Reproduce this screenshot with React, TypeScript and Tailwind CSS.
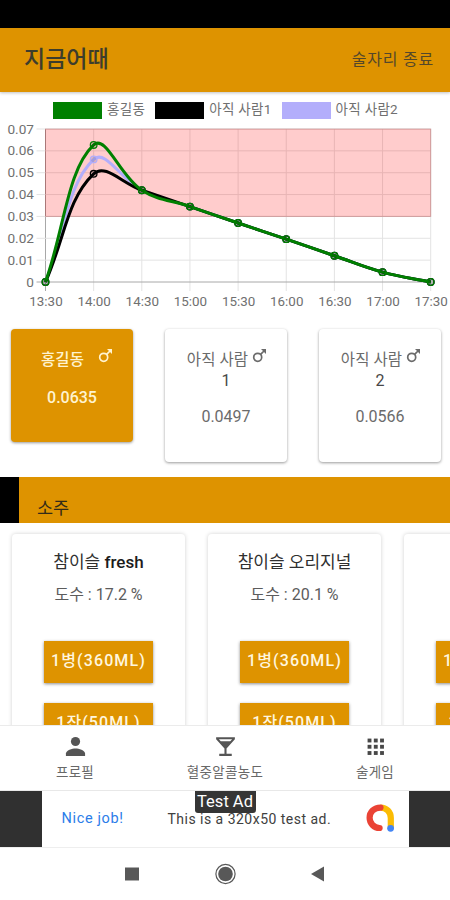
import clsx from 'clsx';

interface Series {
  label: string;
  color: string;
  values: number[];
}

interface Person {
  name: string;
  suffix?: string;
  level: string;
  active?: boolean;
}

interface Drink {
  name: string;
  latin?: string;
  proof: string;
}

const tail = [0.042, 0.0345, 0.027, 0.0196, 0.012, 0.0045, 0];

const series: Series[] = [
  { label: '홍길동', color: '#008000', values: [0, 0.0627, ...tail] },
  { label: '아직 사람1', color: '#000000', values: [0, 0.0495, ...tail] },
  { label: '아직 사람2', color: '#b3aefb', values: [0, 0.0561, ...tail] },
];

const times = ['13:30', '14:00', '14:30', '15:00', '15:30', '16:00', '16:30', '17:00', '17:30'];

const people: Person[] = [
  { name: '홍길동', level: '0.0635', active: true },
  { name: '아직 사람', suffix: '1', level: '0.0497' },
  { name: '아직 사람', suffix: '2', level: '0.0566' },
];

const drinks: Drink[] = [
  { name: '참이슬', latin: 'fresh', proof: '17.2' },
  { name: '참이슬 오리지널', proof: '20.1' },
  { name: '진로', proof: '16' },
];

const LEFT = 45.5;
const STEP = 48.15;
const TOP = 7;
const BOTTOM = 160;
const UNIT = (BOTTOM - TOP) / 7;

const px = (index: number) => LEFT + index * STEP;
const py = (value: number) => BOTTOM - value * 100 * UNIT;
const clampY = (y: number) => Math.max(TOP, Math.min(BOTTOM, y));

// Smooth line with a tension of 0.4
function curve(values: number[]) {
  const points = values.map((value, i) => ({ x: px(i), y: py(value) }));
  const controls = points.map((p, i) => {
    const prev = points[i - 1] ?? p;
    const next = points[i + 1] ?? p;
    const d1 = Math.hypot(p.x - prev.x, p.y - prev.y);
    const d2 = Math.hypot(next.x - p.x, next.y - p.y);
    const fa = (0.4 * d1) / (d1 + d2);
    const fb = (0.4 * d2) / (d1 + d2);
    return {
      inX: p.x - fa * (next.x - prev.x),
      inY: clampY(p.y - fa * (next.y - prev.y)),
      outX: p.x + fb * (next.x - prev.x),
      outY: clampY(p.y + fb * (next.y - prev.y)),
    };
  });
  return points
    .map((p, i) => {
      if (i === 0) return `M${p.x} ${p.y}`;
      const a = controls[i - 1];
      const b = controls[i];
      return `C${a.outX} ${a.outY} ${b.inX} ${b.inY} ${p.x} ${p.y}`;
    })
    .join(' ');
}

function Chart() {
  return (
    <section className="h-[223px] pt-[10px]">
      <div className="flex h-[17px] items-center pl-[53px] text-[13.5px] leading-none tracking-[0.3px] text-[#707070]">
        {series.map((item) => (
          <div key={item.label} className="mr-[10px] flex items-center gap-[5px] whitespace-nowrap">
            <span className="h-[17px] w-[49px]" style={{ backgroundColor: item.color }} />
            <span className="-mt-[2px]">{item.label}</span>
          </div>
        ))}
      </div>
      <svg width="450" height="193" viewBox="0 0 450 193" className="mt-[3px] block">
        {times.map((time, i) => (
          <g key={time}>
            <line x1={px(i)} x2={px(i)} y1={TOP} y2={BOTTOM + 9} stroke={i === 0 ? '#a8a8a8' : '#e3e3e3'} />
            <text x={px(i) + 0.5} y="183.5" textAnchor="middle" fontSize="13.4" fill="#707070">
              {time}
            </text>
          </g>
        ))}
        {Array.from({ length: 8 }, (_, i) => (
          <g key={i}>
            <line
              x1={LEFT - 9}
              x2={px(8)}
              y1={py(i / 100)}
              y2={py(i / 100)}
              stroke={i === 0 ? '#a8a8a8' : '#e3e3e3'}
            />
            <text x="34" y={py(i / 100) + 4.5} textAnchor="end" fontSize="13.6" fill="#707070">
              {i === 0 ? '0' : `0.0${i}`}
            </text>
          </g>
        ))}
        <rect
          x={LEFT}
          y={TOP}
          width={STEP * 8}
          height={UNIT * 4}
          fill="#ff0000"
          fillOpacity="0.2"
          stroke="#a04040"
          strokeOpacity="0.35"
        />
        {[...series].reverse().map((item) => (
          <g key={item.label} fill="none" stroke={item.color}>
            <path d={curve(item.values)} strokeWidth="3" />
            {item.values.map((value, i) => (
              <circle key={i} cx={px(i)} cy={py(value)} r="3.3" strokeWidth="1.3" fill="#000000" fillOpacity="0.1" />
            ))}
          </g>
        ))}
      </svg>
    </section>
  );
}

function MaleIcon() {
  return (
    <svg width="15" height="15" viewBox="0 0 15 15" fill="none" stroke="currentColor" className="shrink-0">
      <circle cx="5.7" cy="9.3" r="4" strokeWidth="1.7" />
      <path d="M8.6 6.4 12 3" strokeWidth="1.7" />
      <path d="M9 1h5v5z" fill="currentColor" stroke="none" />
    </svg>
  );
}

function PersonCard({ person }: { person: Person }) {
  return (
    <div
      className={clsx(
        'w-[122px] rounded-[4px] pt-[21px] text-center text-[16px] shadow-[0_1px_3px_rgba(0,0,0,0.4)]',
        person.active ? 'h-[113px] bg-[#de9300] text-[#fff3d0]' : 'h-[133px] bg-white text-[#6b6b6b]',
      )}
    >
      <div
        className={clsx(
          'flex justify-center text-[15.5px] leading-[21px]',
          person.active ? 'gap-[14px] pl-[10px]' : 'gap-[4px] pl-[2px] tracking-[0.1px]',
        )}
      >
        <span className={clsx('whitespace-nowrap', person.active && 'font-medium')}>{person.name}</span>
        <span className="-mt-[2px]">
          <MaleIcon />
        </span>
      </div>
      {person.suffix && <div className="leading-[20px] text-[#484848]">{person.suffix}</div>}
      <div className={clsx('leading-[20px]', person.active ? 'mt-[17px] font-medium' : 'mt-[16px]')}>{person.level}</div>
    </div>
  );
}

function DrinkCard({ drink }: { drink: Drink }) {
  return (
    <div className="flex h-[260px] w-[173px] shrink-0 flex-col items-center rounded-[4px] bg-white pt-[18px] shadow-[0_0_4px_rgba(0,0,0,0.18)]">
      <h3 className="text-[17px] leading-[20px] whitespace-nowrap text-[#303030]">
        {drink.name} {drink.latin && <span className="font-medium text-[#1c1c1c]">{drink.latin}</span>}
      </h3>
      <p className="mt-[13px] text-[16px] leading-[20px] text-[#5c5c5c]">도수 : {drink.proof} %</p>
      {['1병(360ML)', '1잔(50ML)'].map((label, i) => (
        <button
          key={label}
          className={clsx(
            'h-[42px] w-[109px] shrink-0 bg-[#de9300] pb-[2px] text-[16px] font-medium tracking-[1.1px] whitespace-nowrap text-[#fff6df] shadow-[0_1px_3px_rgba(0,0,0,0.45)]',
            i === 0 ? 'mt-[36px]' : 'mt-[20px]',
          )}
        >
          {label}
        </button>
      ))}
    </div>
  );
}

function BottomNav() {
  return (
    <nav className="grid h-[65px] shrink-0 grid-cols-3 border-t border-[#ebebeb] bg-white text-[13.5px] text-[#686868]">
      <div className="flex flex-col items-center pt-[8px]">
        <svg width="25" height="25" viewBox="0 0 24 24" fill="#555555">
          <circle cx="12" cy="7.2" r="4.4" />
          <path d="M2.8 21v-2.2c0-3 6-4.8 9.2-4.8s9.2 1.8 9.2 4.8V21z" />
        </svg>
        <span className="mt-[4px] leading-[18px] tracking-[0.3px]">프로필</span>
      </div>
      <div className="flex flex-col items-center pt-[8px]">
        <svg width="25" height="25" viewBox="0 0 24 24" fill="#555555">
          <path d="M21 5V3H3v2l8 9v5H6v2h12v-2h-5v-5l8-9zM7.43 7 5.66 5h12.69l-1.78 2H7.43z" />
        </svg>
        <span className="mt-[4px] leading-[18px] tracking-[0.3px]">혈중알콜농도</span>
      </div>
      <div className="flex flex-col items-center pt-[8px]">
        <svg width="25" height="25" viewBox="0 0 24 24" fill="#484848">
          {[4.4, 10.4, 16.4].map((y) =>
            [4.4, 10.4, 16.4].map((x) => <rect key={`${x}-${y}`} x={x} y={y} width="3.7" height="3.7" />),
          )}
        </svg>
        <span className="mt-[4px] leading-[18px] tracking-[0.3px]">술게임</span>
      </div>
    </nav>
  );
}

function AdBanner() {
  return (
    <div className="flex h-[57px] shrink-0 justify-center border-t border-[#e8e8e8] bg-[#303030]">
      <div className="relative flex h-full w-[367px] items-center bg-white">
        <span className="ml-[20px] w-[106px] text-[14.5px] tracking-[0.65px] text-[#2b7de9]">Nice job!</span>
        <span className="text-[14px] tracking-[0.48px] whitespace-nowrap text-[#404040]">This is a 320x50 test ad.</span>
        <svg width="30" height="30" viewBox="0 0 30 30" fill="none" className="absolute top-[13px] left-[323px]">
          <path d="M15.5 3.6c6 0 10.3 4.4 10.3 10.4v10" stroke="#fbbc04" strokeWidth="6.2" />
          <path d="M15.5 3.6C9 3.6 4.6 8.2 4.6 13.8S9 24 14.6 24" stroke="#ea4335" strokeWidth="6.2" strokeLinecap="round" />
          <circle cx="25.6" cy="24.3" r="3.4" fill="#4285f4" />
        </svg>
        <span className="absolute top-0 left-[153px] flex h-[22px] w-[61px] items-center justify-center rounded-b-[3px] bg-[#353535] text-[16.5px] whitespace-nowrap text-white">
          Test Ad
        </span>
      </div>
    </div>
  );
}

export default function App() {
  return (
    <main className="flex h-[900px] w-[450px] flex-col overflow-hidden bg-white font-['Roboto','Noto_Sans_CJK_KR',sans-serif]">
      <div className="h-[28px] shrink-0 bg-black" />
      <header className="flex h-[64px] shrink-0 items-center justify-between bg-[#de9300] pr-[16px] pl-[24px] text-[#3d3d2c] shadow-[0_1px_3px_rgba(0,0,0,0.25)]">
        <h1 className="text-[23px] font-medium">지금어때</h1>
        <span className="text-[16px] tracking-[0.8px] text-[#54472a]">술자리 종료</span>
      </header>

      <Chart />

      <section className="flex h-[162px] shrink-0 items-start justify-between pt-[14px] pr-[9px] pl-[11px]">
        {people.map((person) => (
          <PersonCard key={person.level} person={person} />
        ))}
      </section>

      <div className="flex h-[46px] shrink-0 border-l-[19px] border-black bg-[#de9300] pt-[20px] pl-[18px] text-[17.5px] leading-[22px] text-[#332b18]">
        소주
      </div>

      <section className="flex h-[202px] shrink-0 gap-[23px] overflow-hidden pt-[11px] pl-[12px]">
        {drinks.map((drink) => (
          <DrinkCard key={drink.name + drink.proof} drink={drink} />
        ))}
      </section>

      <BottomNav />
      <AdBanner />

      <footer className="flex h-[53px] items-center justify-center border-t border-[#eeeeee] bg-white text-[#585858]">
        <svg width="220" height="24" viewBox="0 0 220 24" fill="currentColor">
          <path d="M10 5.5h14v13H10z" />
          <circle cx="110.5" cy="12" r="9.6" fill="none" stroke="currentColor" strokeWidth="1.2" />
          <circle cx="110.5" cy="12" r="7.3" />
          <path d="M209 4.5v15L196 12z" />
        </svg>
      </footer>
    </main>
  );
}
